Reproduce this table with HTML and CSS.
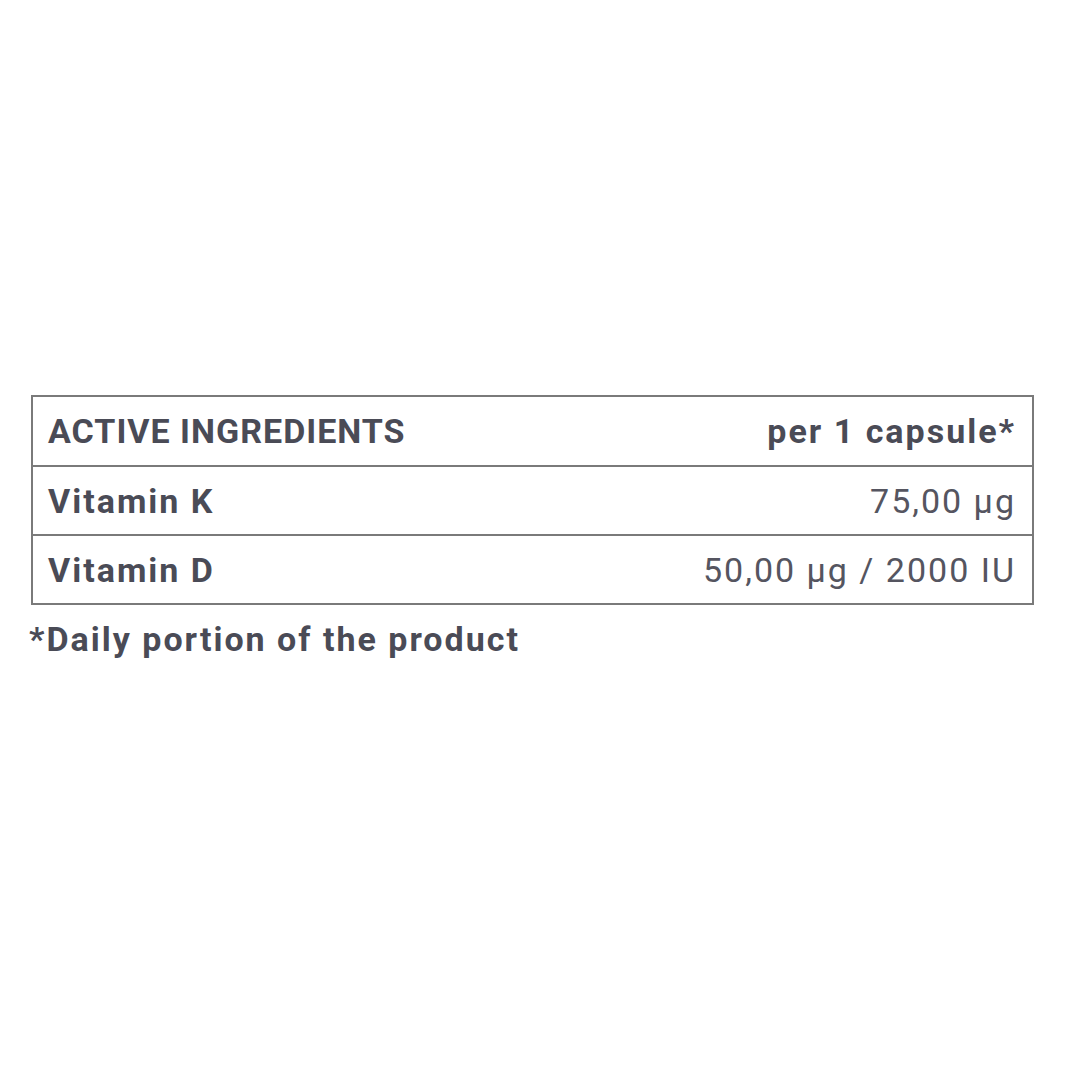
FILE: index.html
```html
<!DOCTYPE html>
<html>
<head>
<meta charset="utf-8">
<link rel="stylesheet" href="styles.css">
</head>
<body>
<div class="page">
  <div class="table">
    <div class="row head">
      <span class="name caps">ACTIVE INGREDIENTS</span>
      <span class="val">per 1 capsule*</span>
    </div>
    <div class="row">
      <span class="name">Vitamin K</span>
      <span class="val light">75,00 µg</span>
    </div>
    <div class="row">
      <span class="name">Vitamin D</span>
      <span class="val light">50,00 µg / 2000 IU</span>
    </div>
  </div>
  <p class="note">*Daily portion of the product</p>
</div>
</body>
</html>
```
FILE: styles.css
```css
html, body { margin: 0; padding: 0; background: #fff; }
.page {
  width: 1080px;
  height: 1080px;
  box-sizing: border-box;
  padding: 395px 46px 0 31px;
  font-family: Roboto, "Liberation Sans", sans-serif;
  color: #4a4b56;
}
.table {
  border: 2px solid #7a7a7a;
  display: flex;
  flex-direction: column;
}
.row {
  display: flex;
  justify-content: space-between;
  align-items: center;
  height: 67px;
  padding: 0 18px 0 15px;
  border-top: 2px solid #7a7a7a;
  font-size: 34px;
  letter-spacing: 2px;
}
.row.head { border-top: none; height: 68px; }
.name { font-weight: 700; }
.name.caps { letter-spacing: 1px; }
.val { font-weight: 700; margin-right: -2px; }
.val.light { font-weight: 400; color: #555560; }
.note {
  margin: 14px 0 0 -2px;
  font-size: 34px;
  letter-spacing: 2px;
  font-weight: 700;
}
```
